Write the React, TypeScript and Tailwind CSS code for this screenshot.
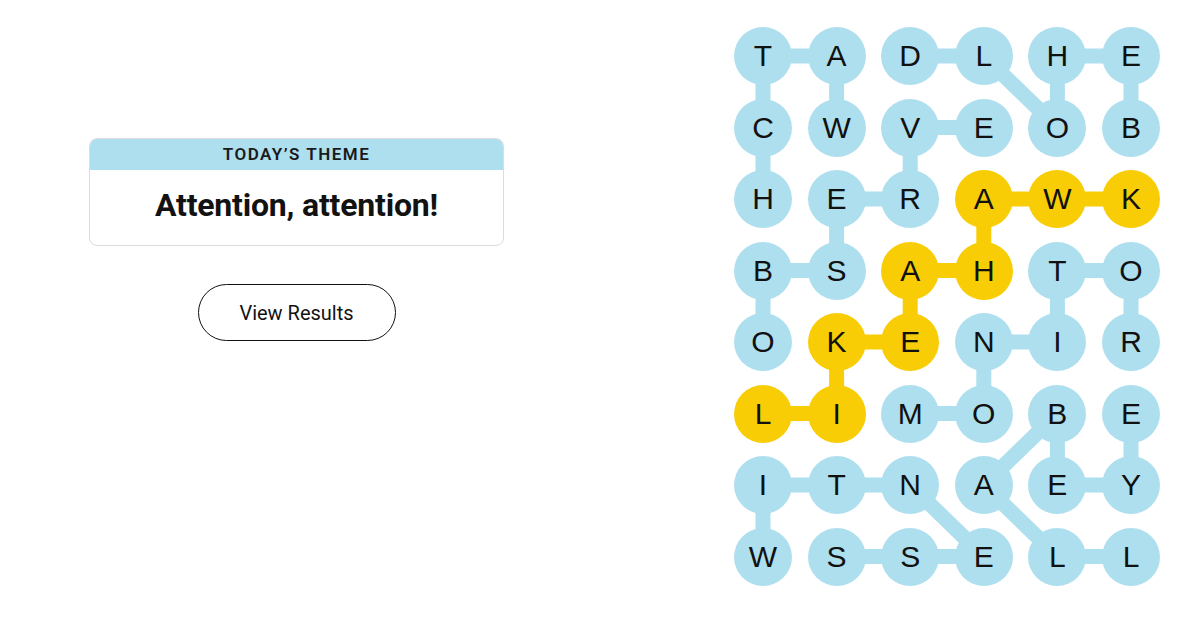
import React from 'react';

const LETTERS = ['TADLHE', 'CWVEOB', 'HERAWK', 'BSAHTO', 'OKENIR', 'LIMOBE', 'ITNAEY', 'WSSELL'];

const GOLD = new Set(['2,3', '2,4', '2,5', '3,2', '3,3', '4,1', '4,2', '5,0', '5,1']);

const BLUE_EDGES: number[][] = [
  [0, 0, 0, 1], [0, 0, 1, 0], [1, 0, 2, 0], [0, 1, 1, 1], [0, 2, 0, 3], [0, 3, 1, 4],
  [0, 4, 1, 4], [0, 4, 0, 5], [0, 5, 1, 5], [1, 2, 1, 3], [1, 2, 2, 2], [2, 1, 2, 2],
  [2, 1, 3, 1], [3, 0, 3, 1], [3, 0, 4, 0], [3, 4, 3, 5], [3, 4, 4, 4], [3, 5, 4, 5],
  [4, 3, 4, 4], [4, 3, 5, 3], [5, 2, 5, 3], [5, 5, 6, 5], [5, 4, 6, 4], [5, 4, 6, 3],
  [6, 4, 6, 5], [6, 3, 7, 4], [7, 4, 7, 5], [6, 0, 6, 1], [6, 1, 6, 2], [6, 0, 7, 0],
  [6, 2, 7, 3], [7, 1, 7, 2], [7, 2, 7, 3],
];

const GOLD_EDGES: number[][] = [
  [2, 3, 2, 4], [2, 4, 2, 5], [2, 3, 3, 3], [3, 2, 3, 3], [3, 2, 4, 2], [4, 1, 4, 2],
  [4, 1, 5, 1], [5, 0, 5, 1],
];

const BLUE = '#aedfee';
const YELLOW = '#f8cd05';

// circle centre inside the board
const cx = (c: number) => 29 + c * 73.6;
const cy = (r: number) => 29 + r * 71.5;

function Board() {
  return (
    <div className="relative">
      {/* connectors between letters */}
      <svg className="absolute inset-0" width="426" height="559" aria-hidden>
        {BLUE_EDGES.map(([r1, c1, r2, c2], i) => (
          <line key={`b${i}`} x1={cx(c1)} y1={cy(r1)} x2={cx(c2)} y2={cy(r2)} stroke={BLUE} strokeWidth={15} />
        ))}
        {GOLD_EDGES.map(([r1, c1, r2, c2], i) => (
          <line key={`g${i}`} x1={cx(c1)} y1={cy(r1)} x2={cx(c2)} y2={cy(r2)} stroke={YELLOW} strokeWidth={15} />
        ))}
      </svg>

      <div className="relative grid grid-cols-[repeat(6,58px)] gap-x-[15.6px] gap-y-[13.5px]">
        {LETTERS.map((row, r) =>
          row.split('').map((ch, c) => {
            const gold = GOLD.has(`${r},${c}`);
            return (
              <div
                key={`${r}-${c}`}
                className={`flex h-[58px] w-[58px] items-center justify-center rounded-full text-[30px] leading-none text-[#111] ${
                  gold ? 'bg-[#f8cd05]' : 'bg-[#aedfee]'
                }`}
              >
                {ch}
              </div>
            );
          }),
        )}
      </div>
    </div>
  );
}

export default function App() {
  return (
    <div className="flex h-[621px] w-[1200px] bg-white font-['Liberation_Sans',Arial,sans-serif]">
      {/* Left: theme + results */}
      <div className="flex w-[593px] flex-col items-center pt-[138px]">
        <div className="w-[415px] overflow-hidden rounded-lg border border-[#dcdcdc]">
          <div className="flex h-[31px] items-center justify-center bg-[#aedfee] text-[17px] font-semibold tracking-[1.5px] text-[#1a1a1a] font-['Roboto',sans-serif]">
            TODAY’S THEME
          </div>
          <div className="flex h-[75px] items-center justify-center pb-[5px] text-[32px] font-bold tracking-[-0.2px] text-[#121212] font-['Roboto',sans-serif]">
            Attention, attention!
          </div>
        </div>

        <button
          type="button"
          className="mt-[38px] flex h-[57px] w-[198px] items-center justify-center rounded-full border-[1.5px] border-[#121212] text-[20px] text-[#121212] font-['Roboto',sans-serif]"
        >
          View Results
        </button>
      </div>

      {/* Right: letter board */}
      <div className="flex flex-1 items-start pl-[141px] pt-[27px]">
        <Board />
      </div>
    </div>
  );
}
